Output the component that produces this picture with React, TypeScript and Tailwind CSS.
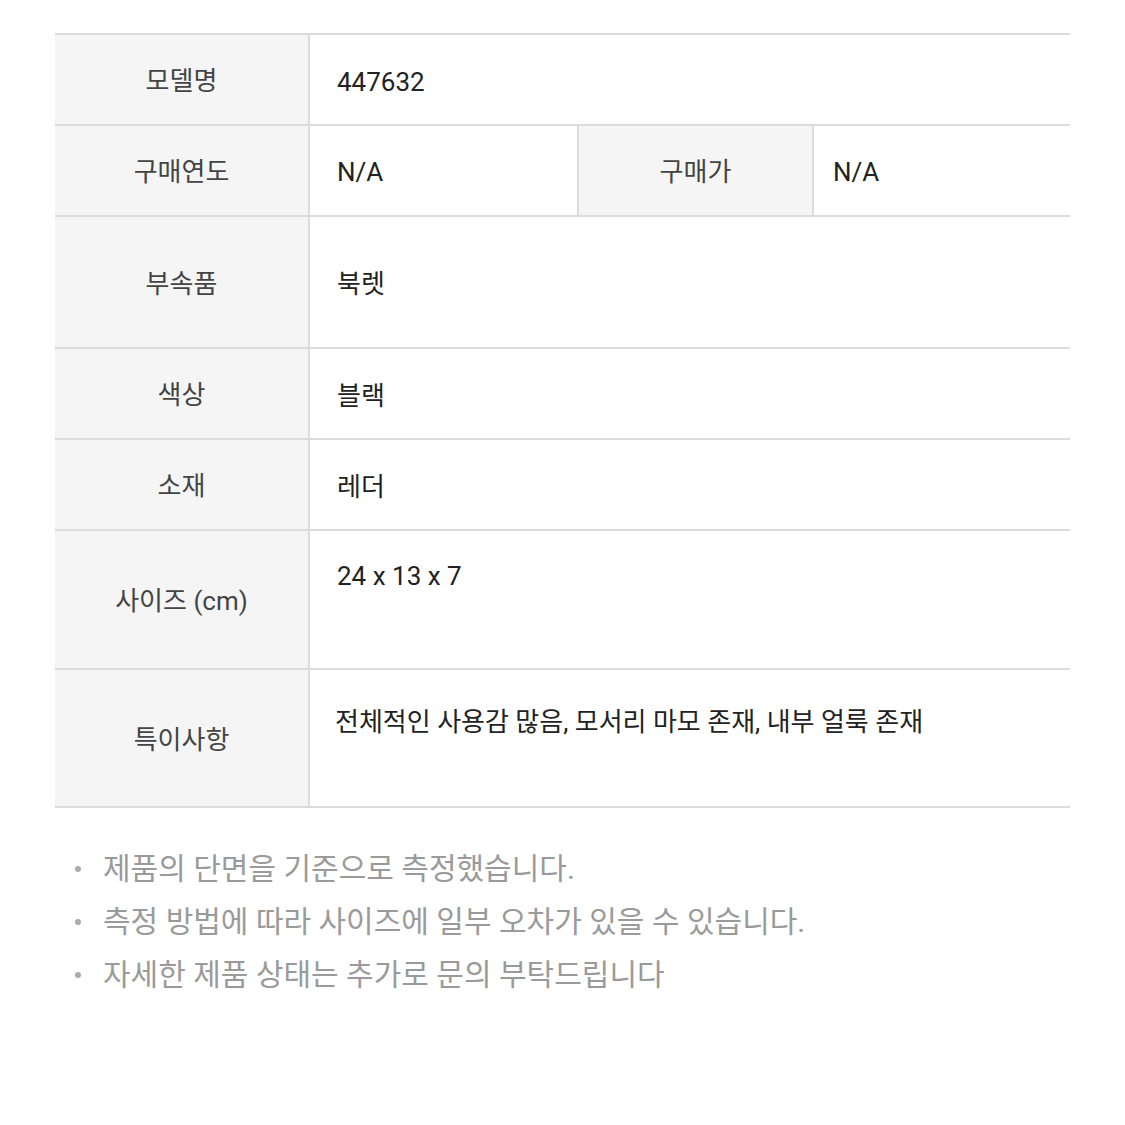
const rows = [
  { label: "모델명", value: "447632", h: "h-[91px]" },
  { label: "구매연도", value: "N/A", h: "h-[91px]", split: { label: "구매가", value: "N/A" } },
  { label: "부속품", value: "북렛", h: "h-[132px]" },
  { label: "색상", value: "블랙", h: "h-[91px]" },
  { label: "소재", value: "레더", h: "h-[91px]" },
  { label: "사이즈 (cm)", value: "24 x 13 x 7", h: "h-[139px]", top: "pt-[27px]" },
  { label: "특이사항", value: "전체적인 사용감 많음, 모서리 마모 존재, 내부 얼룩 존재", h: "h-[138px]", top: "pt-[34px]", tight: true },
];

const notes = [
  "제품의 단면을 기준으로 측정했습니다.",
  "측정 방법에 따라 사이즈에 일부 오차가 있을 수 있습니다.",
  "자세한 제품 상태는 추가로 문의 부탁드립니다",
];

const App = () => {
  return (
    <div
      className="w-[1125px] h-[1125px] bg-white pt-[33px] pl-[55px]"
      style={{ fontFamily: 'Roboto, "Noto Sans CJK KR", sans-serif' }}
    >
      {/* Spec table */}
      <div className="w-[1015px] border-t-2 border-[#dcdcdc]">
        {rows.map((row) => (
          <div key={row.label} className={`flex border-b-2 border-[#dcdcdc] ${row.h}`}>
            <div className="w-[255px] shrink-0 bg-[#f5f5f5] border-r-2 border-[#dcdcdc] flex items-center justify-center pt-[4px] text-[26px] text-[#444]">
              {row.label}
            </div>
            {row.split ? (
              <>
                <div className="w-[269px] shrink-0 flex items-center pl-[27px] pt-[4px] text-[26px] text-[#222] border-r-2 border-[#dcdcdc]">
                  {row.value}
                </div>
                <div className="w-[235px] shrink-0 bg-[#f5f5f5] border-r-2 border-[#dcdcdc] flex items-center justify-center pt-[4px] text-[26px] text-[#444]">
                  {row.split.label}
                </div>
                <div className="flex-1 flex items-center pl-[19px] pt-[4px] text-[26px] text-[#222]">
                  {row.split.value}
                </div>
              </>
            ) : (
              <div
                className={`flex-1 flex ${row.top ? `items-start ${row.top}` : "items-center pt-[4px]"} ${row.tight ? "pl-[25px]" : "pl-[27px]"} text-[26px] leading-[36px] text-[#222]`}
              >
                {row.value}
              </div>
            )}
          </div>
        ))}
      </div>

      {/* Notes */}
      <ul className="mt-[34px] flex flex-col text-[#9a9a9a] text-[30px] leading-[53px]">
        {notes.map((n) => (
          <li key={n} className="flex items-center">
            <span className="w-[6px] h-[6px] rounded-full bg-[#aaa] ml-[20px] mr-[22px]" />
            {n}
          </li>
        ))}
      </ul>
    </div>
  );
};

export default App;
